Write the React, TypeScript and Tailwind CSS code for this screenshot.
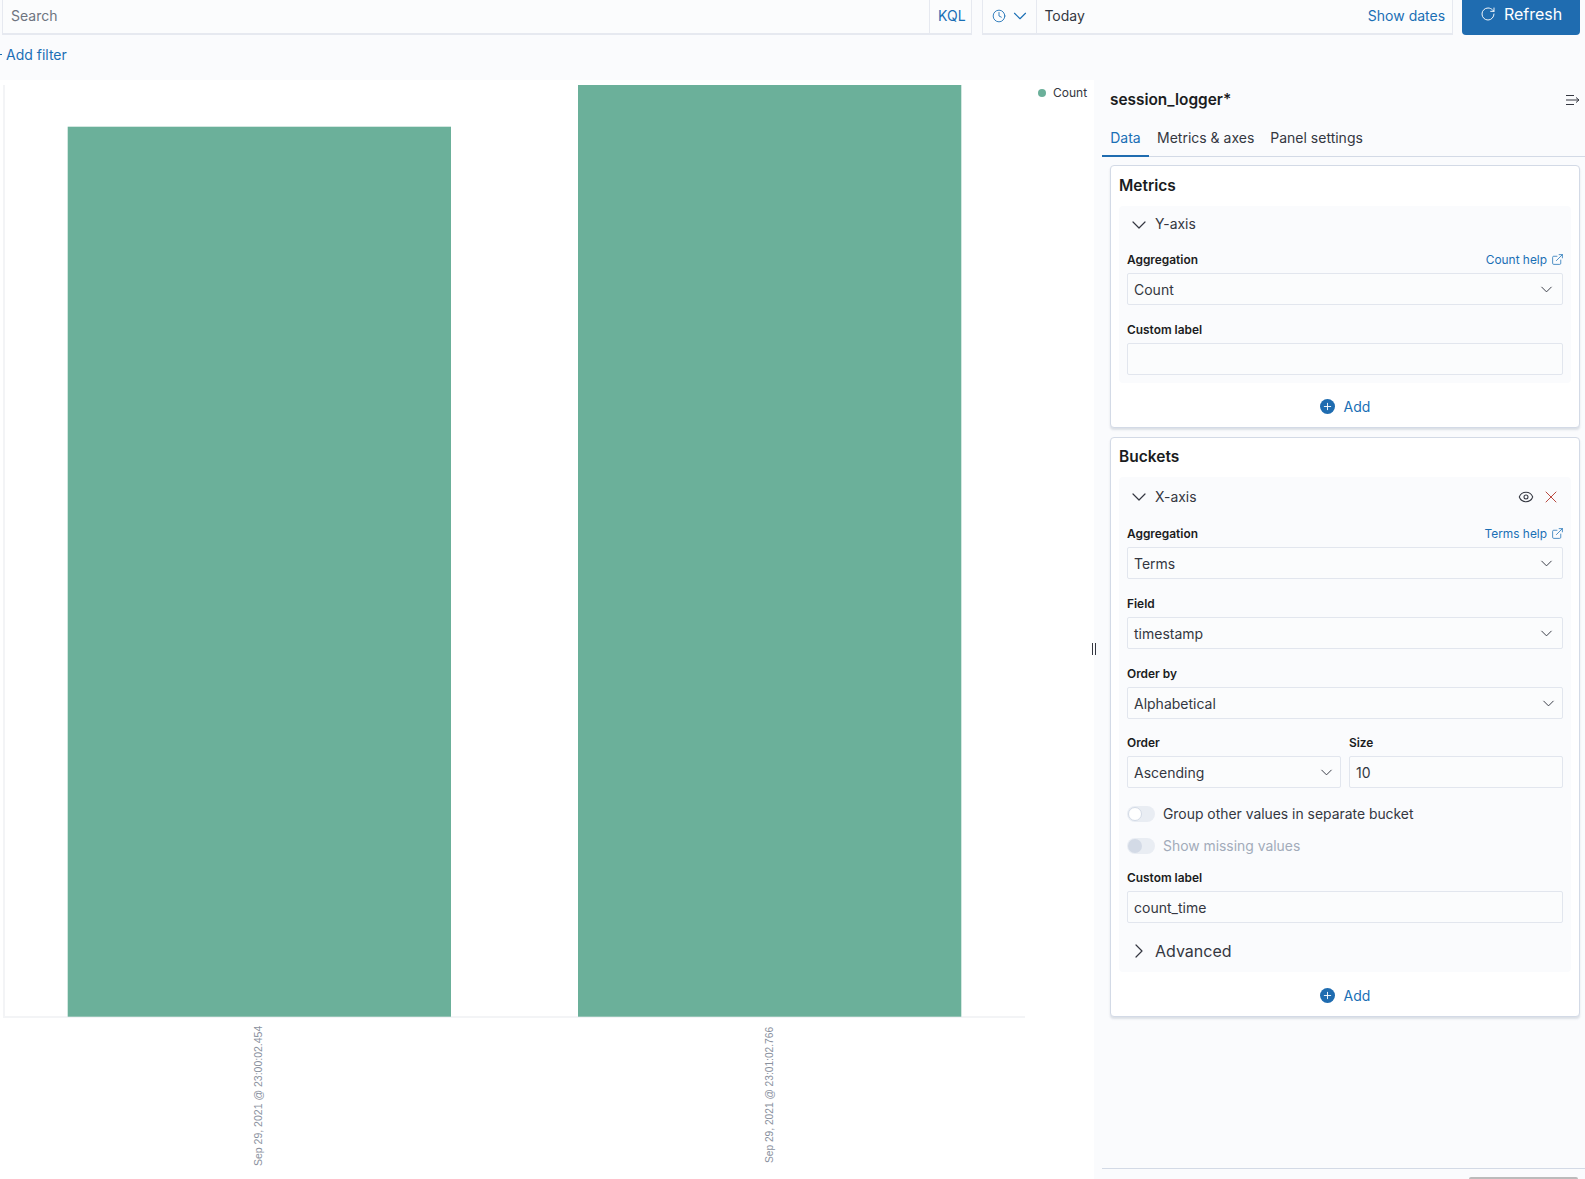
import * as React from "react";
import { ChevronDown, ChevronRight, Clock, RotateCw, ExternalLink, Eye, X, Plus } from "lucide-react";

const fieldClass =
  "flex h-[32px] items-center justify-between rounded-[2px] border border-[#e2e6ee] bg-[#fbfcfd] pl-[6px] text-[14px] text-[#343741]";

const Label = ({ children, help }: { children: string; help?: string }) => (
  <div className="mb-[3px] flex h-[20px] items-center justify-between">
    <span className="text-[11.9px] font-semibold text-[#1a1c21]">{children}</span>
    {help && (
      <span className="flex items-center gap-[4px] text-[11.9px] text-[#1a6fb5]">
        {help}
        <ExternalLink className="-mr-[1px] h-[13px] w-[13px]" strokeWidth={1.4} />
      </span>
    )}
  </div>
);

const Select = ({ value, tight }: { value: string; tight?: boolean }) => (
  <div className={`${fieldClass} ${tight ? "pr-[4px]" : "pr-[6px]"}`}>
    <span>{value}</span>
    <ChevronDown className="h-[19px] w-[19px]" strokeWidth={1.2} />
  </div>
);

const Input = ({ value = "" }: { value?: string }) => <div className={fieldClass}>{value}</div>;

const AddButton = () => (
  <div className="flex h-[44px] items-center justify-center gap-[9px] pt-[2px] text-[14px] text-[#1a6fb5]">
    <span className="flex h-[15px] w-[15px] items-center justify-center rounded-full bg-[#1f6cb0]">
      <Plus className="h-[11px] w-[11px] text-white" strokeWidth={2} />
    </span>
    Add
  </div>
);

const Toggle = ({ label, disabled }: { label: string; disabled?: boolean }) => (
  <div className="flex h-[16px] items-center gap-[8px]">
    <span className="flex h-[16px] w-[28px] items-center rounded-full bg-[#e9edf3]">
      <span
        className={`ml-[1px] h-[14px] w-[14px] rounded-full ${
          disabled ? "bg-[#d3dae6]" : "border border-[#d3dae6] bg-white"
        }`}
      />
    </span>
    <span className={`text-[13.9px] ${disabled ? "text-[#a2abba]" : "text-[#343741]"}`}>{label}</span>
  </div>
);

const BarChart = () => (
  <svg width="1030" height="1099" viewBox="0 80 1030 1099" className="shrink-0">
    <rect x="3" y="85" width="2" height="932" fill="#f3f4f6" />
    <rect x="3" y="1016" width="1022" height="2" fill="#f3f4f6" />
    <rect x="67.7" y="126.7" width="383.3" height="890" fill="#6bb09a" />
    <rect x="578" y="85" width="383.3" height="931.7" fill="#6bb09a" />
    <text
      transform="translate(262 1166) rotate(-90)"
      fontFamily="Liberation Sans, Arial, sans-serif"
      fontSize="10.5"
      fill="#8a919e"
    >
      Sep 29, 2021 @ 23:00:02.454
    </text>
    <text
      transform="translate(773 1163) rotate(-90)"
      fontFamily="Liberation Sans, Arial, sans-serif"
      fontSize="10.2"
      fill="#8a919e"
    >
      Sep 29, 2021 @ 23:01:02.766
    </text>
  </svg>
);

export default function App() {
  return (
    <div className="flex h-[1179px] w-[1585px] flex-col overflow-hidden bg-[#fafbfd] font-['Inter',sans-serif]">
      {/* Query bar */}
      <div className="flex h-[35px] shrink-0 items-stretch pl-[2px] pr-[5px]">
        <div className="flex w-[971px] border-b-2 border-l border-r border-[#e6e9f0] bg-[#fbfcfd] text-[14px]">
          <div className="flex flex-1 items-center pb-[3px] pl-[8px] text-[#6e7480]">Search</div>
          <div className="flex w-[42px] items-center justify-center border-l border-[#e6e9f0] pb-[3px] pl-[2px] text-[#1a6fb5]">
            KQL
          </div>
        </div>
        <div className="ml-[10px] flex w-[471px] border-b-2 border-l border-r border-[#e6e9f0] bg-[#fbfcfd] text-[14px]">
          <div className="flex w-[54px] items-center gap-[3px] border-r border-[#e6e9f0] pb-[1px] pl-[9px] text-[#1a6fb5]">
            <Clock className="h-[14px] w-[14px]" strokeWidth={1.5} />
            <ChevronDown className="h-[22px] w-[22px]" strokeWidth={1.2} />
          </div>
          <div className="flex flex-1 items-center justify-between pb-[3px] pl-[7px] pr-[7px]">
            <span className="text-[#343741]">Today</span>
            <span className="text-[#1a6fb5]">Show dates</span>
          </div>
        </div>
        <div className="ml-[9px] flex w-[118px] items-center justify-center gap-[8px] rounded-b-[4px] bg-[#1f6cb0] pb-[7px] text-[16px] text-white">
          <RotateCw className="h-[16px] w-[16px]" strokeWidth={1.4} />
          Refresh
        </div>
      </div>

      {/* Filter bar */}
      <div className="flex h-[45px] shrink-0 items-center pb-[6px] text-[14px] text-[#1a6fb5]">
        <span className="mr-[4px] h-[1px] w-[2px] bg-[#1a6fb5]" />
        Add filter
      </div>

      <div className="flex min-h-0 flex-1">
        {/* Chart */}
        <div className="flex w-[1094px] shrink-0 bg-white">
          <BarChart />
          <div className="flex h-[26px] items-center pl-[8px] text-[12px] text-[#343741]">
            <span className="mr-[7px] h-[8px] w-[8px] rounded-full bg-[#6bb09a]" />
            Count
          </div>
        </div>

        {/* Editor panel */}
        <div className="flex min-w-0 flex-1 items-stretch">
          <div className="flex w-[8px] shrink-0 -translate-x-[4px] flex-col items-center justify-center pt-[39px]">
            <span className="h-[12px] w-[4px] border-x border-[#343741]" />
          </div>
          <div className="flex min-w-0 flex-1 flex-col">
            <div className="flex h-[40px] shrink-0 items-center justify-between pb-[1px] pl-[8px] pr-[4px]">
              <span className="text-[15.4px] font-semibold text-[#1a1c21]">session_logger*</span>
              <svg width="16" height="16" viewBox="0 0 16 16" fill="none" stroke="#343741" strokeWidth="1">
                <path d="M1 3.5h8M1 8h13M1 12.5h8M11 5.5l3 2.5-3 2.5" />
              </svg>
            </div>
            <div className="flex h-[37px] shrink-0 border-b border-[#d3dae6] pb-[1px] text-[14px] text-[#343741]">
              <span className="-mb-[2px] flex w-[47px] items-center justify-center border-b-2 border-[#1f6cb0] text-[#1a6fb5]">
                Data
              </span>
              <span className="ml-[8px] flex items-center">Metrics &amp; axes</span>
              <span className="ml-[16px] flex items-center">Panel settings</span>
            </div>

            <div className="flex flex-1 flex-col gap-[9px] pl-[8px] pr-[5px] pt-[8px]">
              {/* Metrics */}
              <section className="rounded-[4px] border border-[#d3dae6] bg-white px-[8px] shadow-[0_2px_2px_rgba(152,162,179,0.3)]">
                <h2 className="flex h-[40px] items-center text-[15.5px] font-semibold text-[#1a1c21]">Metrics</h2>
                <div className="rounded-[4px] bg-[#fafbfd] px-[8px] pb-[8px]">
                  <div className="flex h-[37px] items-center gap-[4px] text-[13.9px] text-[#343741]">
                    <ChevronDown className="h-[24px] w-[24px]" strokeWidth={1.2} />
                    Y-axis
                  </div>
                  <div className="mt-[7px]">
                    <Label help="Count help">Aggregation</Label>
                    <Select value="Count" />
                  </div>
                  <div className="mt-[15px]">
                    <Label>Custom label</Label>
                    <Input />
                  </div>
                </div>
                <AddButton />
              </section>

              {/* Buckets */}
              <section className="rounded-[4px] border border-[#d3dae6] bg-white px-[8px] shadow-[0_2px_2px_rgba(152,162,179,0.3)]">
                <h2 className="flex h-[39px] items-center pb-[1px] text-[15.5px] font-semibold text-[#1a1c21]">
                  Buckets
                </h2>
                <div className="rounded-[4px] bg-[#fafbfd] px-[8px]">
                  <div className="flex h-[40px] items-center justify-between pr-[2px] text-[13.9px] text-[#343741]">
                    <span className="flex items-center gap-[4px]">
                      <ChevronDown className="h-[24px] w-[24px]" strokeWidth={1.2} />
                      X-axis
                    </span>
                    <span className="flex items-center gap-[7px]">
                      <Eye className="h-[16px] w-[16px]" strokeWidth={1.6} />
                      <X className="h-[20px] w-[20px] text-[#b9493f]" strokeWidth={1.2} />
                    </span>
                  </div>
                  <div className="mt-[7px]">
                    <Label help="Terms help">Aggregation</Label>
                    <Select value="Terms" />
                  </div>
                  <div className="mt-[15px]">
                    <Label>Field</Label>
                    <Select value="timestamp" />
                  </div>
                  <div className="mt-[15px]">
                    <Label>Order by</Label>
                    <Select value="Alphabetical" tight />
                  </div>
                  <div className="mt-[14px] flex gap-[8px]">
                    <div className="flex-1">
                      <Label>Order</Label>
                      <Select value="Ascending" tight />
                    </div>
                    <div className="flex-1">
                      <Label>Size</Label>
                      <Input value="10" />
                    </div>
                  </div>
                  <div className="mt-[18px] flex flex-col gap-[16px]">
                    <Toggle label="Group other values in separate bucket" />
                    <Toggle label="Show missing values" disabled />
                  </div>
                  <div className="mt-[14px]">
                    <Label>Custom label</Label>
                    <Input value="count_time" />
                  </div>
                  <div className="flex h-[49px] items-center gap-[4px] pt-[7px] text-[16px] text-[#343741]">
                    <ChevronRight className="h-[24px] w-[24px]" strokeWidth={1.2} />
                    Advanced
                  </div>
                </div>
                <AddButton />
              </section>
            </div>

            {/* Bottom rule and scrollbar */}
            <div className="h-[11px] shrink-0 border-t border-[#d3dae6]">
              <div className="ml-[367px] mt-[8px] h-[2px] w-[109px] rounded-t-[2px] bg-[#bbbbbb]" />
            </div>
          </div>
        </div>
      </div>
    </div>
  );
}
